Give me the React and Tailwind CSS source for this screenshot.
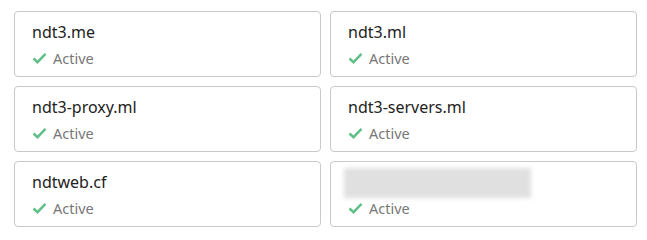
import React from 'react';

const domains = ['ndt3.me', 'ndt3.ml', 'ndt3-proxy.ml', 'ndt3-servers.ml', 'ndtweb.cf', null];

const Check = () => (
  <svg width="15" height="12" viewBox="0 0 15 12" className="shrink-0">
    <path d="M1.5 6.5 L5.5 10.2 L13.5 1.8" fill="none" stroke="#5fbf86" strokeWidth="2.4" />
  </svg>
);

export default function App() {
  return (
    <div className="min-h-screen bg-white px-[14px] pt-[11px]" style={{ fontFamily: '"Noto Sans", "Open Sans", sans-serif' }}>
      <div className="grid w-[623px] grid-cols-2 gap-[9px]">
        {domains.map((name, i) => (
          <div key={i} className="flex h-[66px] flex-col rounded-[4px] border border-[#c9c9c9] pl-[17px] pt-[8px]">
            {name ? (
              <div className="h-[24px] text-[16px] leading-[24px] text-[#222]">{name}</div>
            ) : (
              <div className="-ml-[4px] -mt-[2px] mb-[-4px] h-[30px] w-[187px] bg-[#e0e0e0] blur-[2px]" />
            )}
            <div className="mt-[5px] flex items-center gap-[6px] text-[14.5px] leading-[18px] text-[#777]">
              <Check />
              <span>Active</span>
            </div>
          </div>
        ))}
      </div>
    </div>
  );
}
